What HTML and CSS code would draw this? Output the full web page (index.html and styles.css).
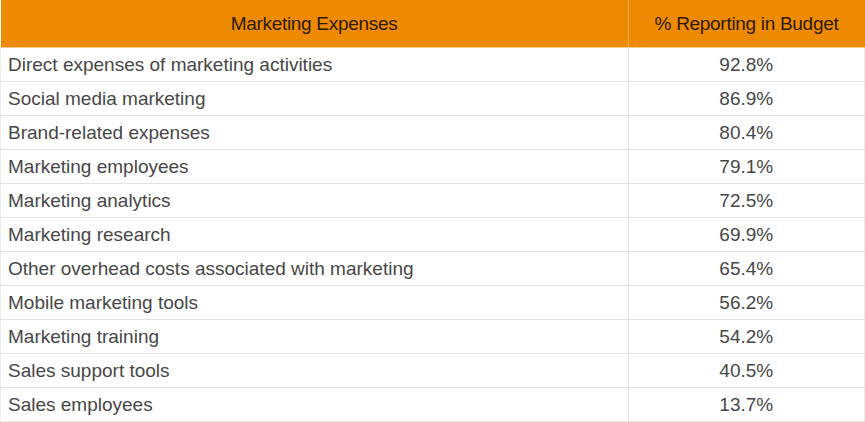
FILE: index.html
```html
<!DOCTYPE html>
<html>
<head>
<meta charset="utf-8">
<link rel="stylesheet" href="styles.css">
</head>
<body>
<table class="tbl">
  <thead>
    <tr><th class="c1">Marketing Expenses</th><th class="c2">% Reporting in Budget</th></tr>
  </thead>
  <tbody>
    <tr><td class="c1">Direct expenses of marketing activities</td><td class="c2">92.8%</td></tr>
    <tr><td class="c1">Social media marketing</td><td class="c2">86.9%</td></tr>
    <tr><td class="c1">Brand-related expenses</td><td class="c2">80.4%</td></tr>
    <tr><td class="c1">Marketing employees</td><td class="c2">79.1%</td></tr>
    <tr><td class="c1">Marketing analytics</td><td class="c2">72.5%</td></tr>
    <tr><td class="c1">Marketing research</td><td class="c2">69.9%</td></tr>
    <tr><td class="c1">Other overhead costs associated with marketing</td><td class="c2">65.4%</td></tr>
    <tr><td class="c1">Mobile marketing tools</td><td class="c2">56.2%</td></tr>
    <tr><td class="c1">Marketing training</td><td class="c2">54.2%</td></tr>
    <tr><td class="c1">Sales support tools</td><td class="c2">40.5%</td></tr>
    <tr><td class="c1">Sales employees</td><td class="c2">13.7%</td></tr>
  </tbody>
</table>
</body>
</html>
```
FILE: styles.css
```css
html, body { margin: 0; padding: 0; background: #fff; }
body { width: 865px; height: 422px; overflow: hidden; }
.tbl {
  width: 865px;
  border-collapse: collapse;
  table-layout: fixed;
  font-family: "Liberation Sans", Arial, sans-serif;
}
.tbl th {
  background: #ee8a00;
  color: #301a02;
  font-weight: normal;
  font-size: 19px;
  height: 47px;
  padding: 0;
  text-align: center;
  vertical-align: middle;
  letter-spacing: -0.3px;
  border-bottom: 1px solid #f6c88a;
}
.tbl th.c1 { width: 627px; border-right: 1px solid #f4ad55; }
.tbl td {
  height: 33px;
  padding: 0;
  font-size: 19px;
  color: #474747;
  border-bottom: 1px solid #e2e2e2;
  vertical-align: middle;
}
.tbl td.c1 { padding-left: 7px; border-left: 1px solid #ececec; border-right: 1px solid #e2e2e6; }
.tbl td.c2 { text-align: center; border-right: 1px solid #ececec; }
```
